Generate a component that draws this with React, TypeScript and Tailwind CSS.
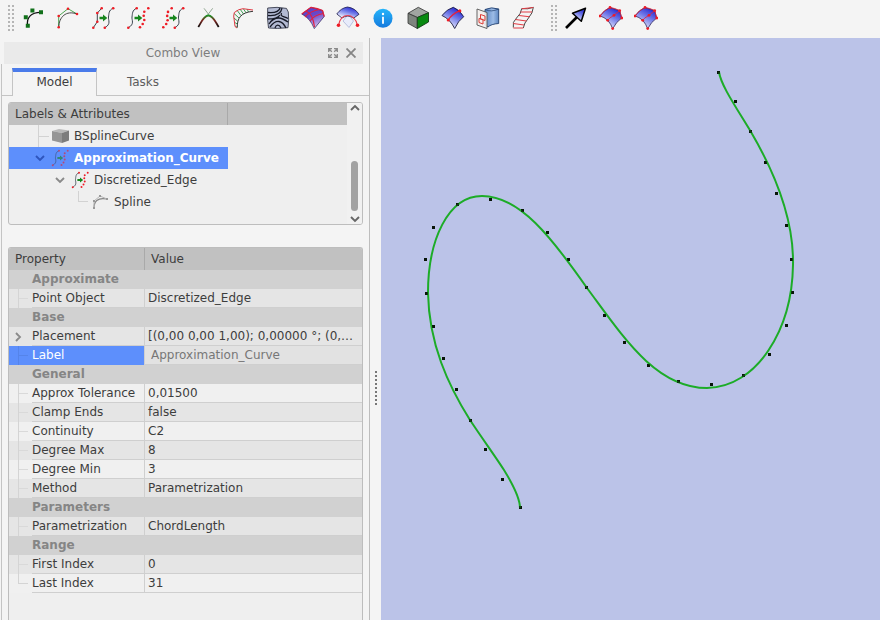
import React from 'react';

type IconProps = { children: React.ReactNode };

function Icon({ children }: IconProps) {
  return (
    <svg viewBox="0 0 24 24" className="size-6" fill="none" aria-hidden="true">
      {children}
    </svg>
  );
}

function Dots({ points, r = 1.3 }: { points: number[][]; r?: number }) {
  return (
    <g fill="#ee1c25">
      {points.map(([x, y]) => (
        <circle key={`${x}-${y}`} cx={x} cy={y} r={r} />
      ))}
    </g>
  );
}

const SplineWave = ({ x = 0 }: { x?: number }) => (
  <path d={`M${2.3 + x} 21.7C${9 + x} 18 ${5.5 + x} 14 ${6 + x} 11S${6 + x} 4 ${10.7 + x} 2.3`} stroke="#26313c" strokeWidth="0.9" />
);

const GreenArrow = () => (
  <path d="M8.5 10.8H12V8.6L16.3 12 12 15.4V13.2H8.5Z" fill="#16861c" />
);

const leftDots = [[2.3, 21.3], [5.2, 18], [6.6, 14.2], [6.2, 9.9], [7, 5.9], [10.7, 2.3]];
const rightDots = [[14, 21.3], [16.7, 18], [18.3, 14], [17.7, 9.7], [18.3, 5.7], [22.3, 2.3]];

const Discretize = () => (
  <Icon>
    <SplineWave />
    <GreenArrow />
    <Dots points={[[2.3, 21.7], [10.7, 2.3], ...rightDots]} />
  </Icon>
);

const Approximate = () => (
  <Icon>
    <SplineWave x={11.5} />
    <GreenArrow />
    <Dots points={[[13.8, 21.7], [22.2, 2.3], ...leftDots]} />
  </Icon>
);

const SurfacePatch = () => (
  <Icon>
    <path d="M1 10Q5 4 11 1.5L20.7 4.7 22.7 12Q17 16 13.7 22.7 12 18 8.7 14.3 5 11 1 10Z" fill="url(#blue)" stroke="#27205c" strokeWidth="0.8" />
    <path d="M1 10Q5 4 11 1.5Q16 2 20.7 4.7L22.7 12M8.7 14.3Q10 12 15 9.3L20.7 4.7" stroke="#e5203c" strokeWidth="0.8" />
    <Dots points={[[1, 10], [11, 1.4], [20.7, 4.7], [22.7, 12], [13.7, 22.6], [8.7, 14.3], [15, 9.3]]} r={1.4} />
  </Icon>
);

const tools: { name: string; icon: React.ReactNode }[] = [
  {
    name: 'Editable spline',
    icon: (
      <Icon>
        <path d="M6.7 19.7C5 11 11 6 20 6.3" stroke="#111" strokeWidth="1.3" />
        <path d="M4.8 17.7h4v4h-4zM2.8 9.2h4v4h-4zM9.4 2.4h4v4h-4zM18 4.3h4v4h-4z" fill="#11701a" />
      </Icon>
    ),
  },
  {
    name: 'Spline',
    icon: (
      <Icon>
        <path d="M2.7 21.3V10L12 2.7 21 8" stroke="#3a9c3d" strokeWidth="0.9" />
        <path d="M2.7 21.3C3 11 10 4 21 8" stroke="#333" strokeWidth="0.9" />
        <Dots points={[[2.7, 21.3], [2.7, 10], [12, 2.7], [21, 8]]} />
      </Icon>
    ),
  },
  {
    name: 'Join curves',
    icon: (
      <Icon>
        <path d="M2.3 21.7 6.3 15.7V7L10.7 2.3" stroke="#26313c" strokeWidth="0.9" />
        <SplineWave x={11.5} />
        <GreenArrow />
        <Dots points={[[2.3, 21.7], [6.3, 15.7], [6.3, 7], [10.7, 2.3], [13.8, 21.7], [22.2, 2.3]]} />
      </Icon>
    ),
  },
  { name: 'Discretize', icon: <Discretize /> },
  { name: 'Approximate', icon: <Approximate /> },
  {
    name: 'Blend curve',
    icon: (
      <Icon>
        <path d="M8 2.3 15 11.5M16.7 2.3 9.7 11.5" stroke="#93a893" strokeWidth="1" />
        <path d="M2.3 21C5 17 7.5 9.5 12.4 9.5S20 17 22.7 21" stroke="url(#blend)" strokeWidth="1.8" />
      </Icon>
    ),
  },
  {
    name: 'Curvature comb',
    icon: (
      <Icon>
        <path d="M6.3 21.5 4.2 20M6.3 18 3 16M6.6 15 2.8 12M8 12 3 7.4M10 9.6 6 4.2M12.5 8 9 3M15 6.7 12.5 3M17.5 6 16 3" stroke="#279643" strokeWidth="0.9" />
        <path d="M6.3 21.5C6 12 10 6.5 22 5.3" stroke="#222" strokeWidth="0.9" />
        <path d="M6 22 4 20.5 2.7 10 3.3 6.5 7.5 3.8 12 2.7 22 4" stroke="#e03a45" strokeWidth="1" />
      </Icon>
    ),
  },
  {
    name: 'Zebra analysis',
    icon: (
      <Icon>
        <path d="M1.7 2Q11 .5 20.5 2.4L22.3 6Q23.2 14 22 21.7 11 23 2.5 22Q.8 12 1.7 2Z" fill="#b3bad3" stroke="#26293a" strokeWidth="0.8" />
        <path d="M2 6.500C8 7 13 6 14 2M2 9.500C9 10 15 8 16 2.200M2 13C6 13 12 12 14 9M3 18C6 13 10 12 13 12S19 14 22 16M4 21C7 17 10 15 13 15.500S18 18 20 22M9 22C10 18.500 13 18 15 22M22 12.500C18 10 14 11 15.500 7" stroke="#171a27" strokeWidth="1.3" />
      </Icon>
    ),
  },
  {
    name: 'Trim face',
    icon: (
      <Icon>
        <path d="M.8 8 10 1.3 21.5 4.5 23.2 10.5 13.3 22.6Q9 12 .8 8Z" fill="url(#violet)" stroke="#27205c" strokeWidth="0.7" />
        <path d="M.8 8 10 1.3Q17 2 21.5 4.5L23.2 10.5M4 11Q9 5 19 3.5M9 15Q13 9 22.500 7.500M5 5Q12 8 13.500 21" stroke="#e0203f" strokeWidth="1.2" />
      </Icon>
    ),
  },
  {
    name: 'Isocurve',
    icon: (
      <Icon>
        <path d="M7 15 12 8.5 17.5 15 13 21.5Z" fill="#e8ecfb" stroke="#a9b3d8" strokeWidth="0.8" />
        <path d="M.8 8Q5 2 11.5 1 19 2 23 8.3L17.5 12.2Q12 8 6 12Z" fill="url(#blue)" stroke="#1d1c4d" strokeWidth="0.8" />
        <path d="M2.7 19C4 11 9 9.5 12 9.5S20 12 21.3 19" stroke="#ea4050" strokeWidth="1.1" />
        <Dots points={[[2.5, 19.2], [21.5, 19.2]]} r={1.8} />
      </Icon>
    ),
  },
  {
    name: 'Geometry info',
    icon: (
      <Icon>
        <circle cx="12" cy="12.3" r="9.5" fill="url(#info)" />
        <circle cx="12" cy="8" r="1.2" fill="#fff" />
        <path d="M12 10.8V17.8" stroke="#fff" strokeWidth="1.8" />
      </Icon>
    ),
  },
  {
    name: 'Solid',
    icon: (
      <Icon>
        <path d="M12.3 1.3 2 7.3 11.3 11.5 22.5 6.7Z" fill="#a1a5a1" stroke="#333" strokeWidth="0.8" strokeLinejoin="round" />
        <path d="M2 7.3V17.3L11.3 22.5V11.5Z" fill="#7f857f" stroke="#333" strokeWidth="0.8" strokeLinejoin="round" />
        <path d="M11.3 11.5V22.5L22.5 16V6.7Z" fill="#088a10" stroke="#143b16" strokeWidth="0.9" strokeLinejoin="round" />
      </Icon>
    ),
  },
  {
    name: 'Split surface',
    icon: (
      <Icon>
        <path d="M1 9.5Q6 3 12.3 1.3 19 4 22.7 10.7 17 15 13.7 22.5 9 13 1 9.5Z" fill="url(#blue)" stroke="#1b1b3f" strokeWidth="0.9" />
        <path d="M7.3 14Q11 8 19 4.7" stroke="#e5203c" strokeWidth="1.3" />
        <Dots points={[[7.3, 14], [18.8, 4.9]]} r={1.6} />
      </Icon>
    ),
  },
  {
    name: 'Map sketch on face',
    icon: (
      <Icon>
        <path d="M9 3.5Q15 .5 22.7 3V17.5Q15 18 12 21L9 19Z" fill="url(#steel)" stroke="#23416f" strokeWidth="0.9" />
        <path d="M9 3.5Q15 6.5 22.7 3" stroke="#23416f" strokeWidth="0.7" />
        <path d="M1 3 11 6.5V22.5L1 19Z" fill="#f4efed" fillOpacity="0.9" stroke="#555" strokeWidth="0.9" />
        <path d="M4.5 8.5 9 10V14.5L4.5 13ZM3 12.5 7 13.5V18L3 16.5Z" stroke="#dc3c36" strokeWidth="1" />
      </Icon>
    ),
  },
  {
    name: 'Sweep surface',
    icon: (
      <Icon>
        <path d="M2.3 21.5Q1 16 5.5 12T10.7 2.7Q17 3.5 22.3 1.3 22 7 17.5 12T12.3 22" stroke="#333" strokeWidth="0.9" />
        <path d="M2.3 22H12.3M2.3 17.5 13 19M4.5 13.5 15.5 15M8 9.5 18.5 10.7M9.5 6 21 6M10.7 2.7 22.3 1.5" stroke="#e23d45" strokeWidth="1.1" />
      </Icon>
    ),
  },
];

const extraTools = [
  {
    name: 'Pick arrow',
    icon: (
      <Icon>
        <path d="M2 22 13 11" stroke="#000" strokeWidth="2.6" />
        <path d="M21.5 2.3 8.5 7.3 17.3 15.3Z" fill="url(#blue)" stroke="#000" strokeWidth="1.5" strokeLinejoin="round" />
      </Icon>
    ),
  },
  { name: 'Gordon surface', icon: <SurfacePatch /> },
  { name: 'Segment surface', icon: <SurfacePatch /> },
];

function Gradients() {
  return (
    <svg className="absolute size-0" aria-hidden="true">
      <defs>
        <linearGradient id="blue" x1="0.9" y1="0.1" x2="0.4" y2="1">
          <stop offset="0" stopColor="#2022cf" />
          <stop offset="0.45" stopColor="#6f78e8" />
          <stop offset="1" stopColor="#eef1fd" />
        </linearGradient>
        <linearGradient id="violet" x1="0" y1="0" x2="0.4" y2="1">
          <stop offset="0" stopColor="#4a3fd0" />
          <stop offset="0.5" stopColor="#6a48c8" />
          <stop offset="1" stopColor="#c9b6ea" />
        </linearGradient>
        <linearGradient id="blend" x1="0" y1="9" x2="0" y2="21" gradientUnits="userSpaceOnUse">
          <stop offset="0" stopColor="#169a25" />
          <stop offset="0.45" stopColor="#7c2720" />
          <stop offset="1" stopColor="#0c0c0c" />
        </linearGradient>
        <linearGradient id="info" x1="0" y1="0" x2="0" y2="1">
          <stop offset="0" stopColor="#24b4fa" />
          <stop offset="1" stopColor="#1579dd" />
        </linearGradient>
        <linearGradient id="steel" x1="0" y1="0" x2="1" y2="0">
          <stop offset="0" stopColor="#5d88c4" />
          <stop offset="0.6" stopColor="#9dbce6" />
          <stop offset="1" stopColor="#5c86c0" />
        </linearGradient>
      </defs>
    </svg>
  );
}

function Grip() {
  return (
    <svg className="h-7 w-[6px] shrink-0" aria-hidden="true">
      <path d="M1 1V28M5 1V28" stroke="#b5b5b5" strokeWidth="2" strokeDasharray="2 2" />
    </svg>
  );
}

function Chevron({ dir, color = '#8a8a8a' }: { dir: 'up' | 'down' | 'right'; color?: string }) {
  const d = { up: 'M1 7 5 3 9 7', down: 'M1 3 5 7 9 3', right: 'M3 1 7 5 3 9' }[dir];
  return (
    <svg viewBox="0 0 10 10" className="size-[10px] shrink-0" fill="none" aria-hidden="true">
      <path d={d} stroke={color} strokeWidth="1.9" />
    </svg>
  );
}

function ToolButton({ name, icon }: { name: string; icon: React.ReactNode }) {
  return (
    <button type="button" aria-label={name} title={name} className="flex w-[35px] shrink-0 justify-center">
      {icon}
    </button>
  );
}

function Toolbar() {
  return (
    <header className="flex h-[38px] items-center overflow-hidden bg-[#f4f4f4] pb-[2px] pl-2">
      <Grip />
      <div className="ml-[1px] flex">
        {tools.map((t) => <ToolButton key={t.name} {...t} />)}
      </div>
      <div className="ml-[11px] flex items-center">
        <Grip />
        <div className="ml-[1px] flex">
          {extraTools.map((t) => <ToolButton key={t.name} {...t} />)}
        </div>
      </div>
    </header>
  );
}

function ModelTree() {
  return (
    <section className="mt-[6px] mr-[6px] ml-2 flex h-[123px] overflow-hidden rounded-[3px] border border-[#bdbdbd] bg-[#efefef]">
      <div className="min-w-0 flex-1">
        <div className="flex h-[22px] items-center bg-[#c1c1c1]">
          <span className="flex h-full w-[219px] items-center border-r border-[#a9a9a9] pl-[6px]">Labels &amp; Attributes</span>
        </div>
        <ul role="tree" aria-label="Model" className="leading-[22px]">
          <li role="treeitem" aria-selected="false" className="flex h-[22px] items-center pl-[29px]">
            <span className="h-full border-l border-[#d2d2d2]" />
            <span className="w-[10px] border-t border-[#d2d2d2]" />
            <svg viewBox="0 0 18 18" className="mr-[4px] ml-[3px] size-[18px]" aria-hidden="true">
              <path d="M0 4 7 2 17 3.500 10 6Z" fill="#b8b8b8" />
              <path d="M0 4 10 6V16L0 13.500Z" fill="#959595" />
              <path d="M10 6 17 3.500V13.500L10 16Z" fill="#7c7c7c" />
            </svg>
            BSplineCurve
          </li>
          <li role="treeitem" aria-expanded="true" aria-selected="true" className="flex h-[22px] w-[219px] items-center bg-[#5d8ffc] pl-[26px] font-bold text-white">
            <Chevron dir="down" color="#2e55bd" />
            <span className="ml-[6px] flex h-4 w-[18px] items-center justify-center opacity-60 [&>svg]:size-[18px]"><Discretize /></span>
            <span className="ml-[5px]">Approximation_Curve</span>
          </li>
          <li role="treeitem" aria-expanded="true" aria-selected="false" className="flex h-[22px] items-center pl-[46px]">
            <Chevron dir="down" />
            <span className="ml-[6px] flex h-4 w-[18px] items-center justify-center [&>svg]:size-[18px]"><Discretize /></span>
            <span className="ml-[5px]">Discretized_Edge</span>
          </li>
          <li role="treeitem" aria-selected="false" className="flex h-[22px] items-center pl-[69px]">
            <span className="mb-[11px] h-[11px] w-[10px] border-b border-l border-[#d2d2d2]" />
            <svg viewBox="0 0 18 18" className="mx-[4px] size-[18px]" fill="none" aria-hidden="true">
              <path d="M2 15C2 9 5 4 15 6" stroke="#858585" strokeWidth="1.2" />
              <path d="M2 15V8L8 3 15 6" stroke="#b7b7b7" />
              <path d="M1 14h2v2H1zM1 7h2v2H1zM7 2h2v2H7zM14 5h2v2h-2z" fill="#999" />
            </svg>
            Spline
          </li>
        </ul>
      </div>
      <div className="flex w-[15px] flex-col items-center justify-between bg-[#f1f1f1]">
        <button type="button" aria-label="Scroll up"><Chevron dir="up" color="#666" /></button>
        <div className="mt-auto mb-[3px] h-[50px] w-[7px] rounded-full bg-[#a2a2a2]" />
        <button type="button" aria-label="Scroll down"><Chevron dir="down" color="#666" /></button>
      </div>
    </section>
  );
}

type Row = { name: string; value?: string; shade?: boolean; kind?: 'group' | 'expand' | 'edit' | 'last' };

const rows: Row[] = [
  { name: 'Approximate', kind: 'group' },
  { name: 'Point Object', value: 'Discretized_Edge', shade: true },
  { name: 'Base', kind: 'group' },
  { name: 'Placement', value: '[(0,00 0,00 1,00); 0,00000 °; (0,…', shade: true, kind: 'expand' },
  { name: 'Label', value: 'Approximation_Curve', kind: 'edit' },
  { name: 'General', kind: 'group' },
  { name: 'Approx Tolerance', value: '0,01500' },
  { name: 'Clamp Ends', value: 'false', shade: true },
  { name: 'Continuity', value: 'C2' },
  { name: 'Degree Max', value: '8', shade: true },
  { name: 'Degree Min', value: '3' },
  { name: 'Method', value: 'Parametrization', shade: true },
  { name: 'Parameters', kind: 'group' },
  { name: 'Parametrization', value: 'ChordLength', shade: true },
  { name: 'Range', kind: 'group' },
  { name: 'First Index', value: '0', shade: true },
  { name: 'Last Index', value: '31', kind: 'last' },
];

function PropertyRow({ name, value, shade, kind }: Row) {
  if (kind === 'group') {
    return (
      <tr className="h-[19px] bg-[#d1d1d1]">
        <th colSpan={2} scope="colgroup" className="border-b border-[#d1d1d1] p-0 pl-[23px] text-left font-bold text-[#858585]">{name}</th>
      </tr>
    );
  }
  const edit = kind === 'edit';
  return (
    <tr className={`h-[19px] ${shade ? 'bg-[#e5e5e5]' : 'bg-[#f0f0f0]'}`}>
      <th scope="row" className={`p-0 text-left font-normal ${edit ? 'bg-[#5d8ffc] text-white' : ''}`}>
        <div className="flex h-[19px]">
          <span className="flex w-[23px] shrink-0 items-center pl-[4px]">
            {kind === 'expand' ? (
              <Chevron dir="right" />
            ) : (
              <span className={`ml-[5px] flex items-center ${kind === 'last' ? 'mb-[9px] h-[10px] border-b' : 'h-full'} w-[10px] border-l ${edit ? 'border-[#5584ea]' : 'border-[#d4d4d4]'}`}>
                {kind !== 'last' && <span className={`w-full border-t ${edit ? 'border-[#5584ea]' : 'border-[#d9d9d9]'}`} />}
              </span>
            )}
          </span>
          <span className={`flex-1 border-b ${edit ? 'border-[#5d8ffc]' : 'border-[#cfcfcf]'}`}>
            {edit ? <label htmlFor="label-value">{name}</label> : name}
          </span>
        </div>
      </th>
      <td className="border-b border-l border-[#cfcfcf] p-0">
        {edit ? (
          <input id="label-value" defaultValue={value} className="block h-[18px] w-full bg-[#e2e2e2] pl-[6px] text-[#777] outline-none" />
        ) : (
          <div className="truncate pl-[3px]">{value}</div>
        )}
      </td>
    </tr>
  );
}

function Properties() {
  return (
    <section className="mt-[22px] mr-[6px] ml-2 flex-1 overflow-hidden rounded-t-[3px] border border-b-0 border-[#bdbdbd] bg-[#efefef]">
      <table className="w-full table-fixed border-separate border-spacing-0 leading-[18px]">
        <colgroup>
          <col className="w-[135px]" />
          <col />
        </colgroup>
        <thead>
          <tr className="h-[22px] bg-[#c1c1c1]">
            <th scope="col" className="p-0 pl-[6px] text-left font-normal">Property</th>
            <th scope="col" className="border-l border-[#a9a9a9] p-0 pl-[6px] text-left font-normal">Value</th>
          </tr>
        </thead>
        <tbody>
          {rows.map((r) => <PropertyRow key={r.name} {...r} />)}
        </tbody>
      </table>
    </section>
  );
}

function ComboView() {
  return (
    <aside className="flex w-[370px] shrink-0 flex-col border-r border-[#bdbdbd]">
      <div className="mt-[4px] mr-[6px] ml-1 flex h-[22px] shrink-0 items-center bg-[#eaeaea] text-[#7d7d7d]">
        <h1 className="flex-1 pl-[34px] text-center">Combo View</h1>
        <button type="button" aria-label="Float panel" className="mr-[8px]">
          <svg viewBox="0 0 10 10" className="size-[10px]" fill="none" stroke="#8a8a8a" strokeWidth="1.3" aria-hidden="true">
            <path d="M.7 4V.7H4M6 .7H9.3V4M9.3 6V9.3H6M4 9.3H.7V6M1 1 3.8 3.8M9 1 6.2 3.8M9 9 6.2 6.2M1 9 3.8 6.2" />
          </svg>
        </button>
        <button type="button" aria-label="Close panel" className="mr-[7px]">
          <svg viewBox="0 0 10 10" className="size-[10px]" fill="none" stroke="#858585" strokeWidth="1.8" aria-hidden="true">
            <path d="M.5 .5 9.5 9.5M9.5 .5 .5 9.5" />
          </svg>
        </button>
      </div>
      <div className="ml-[1px] flex flex-1 flex-col border-l border-[#c4c4c4]">
        <div role="tablist" className="flex h-8 shrink-0 pt-[4px]">
          <span className="w-[10px] border-b border-[#c4c4c4]" />
          <button type="button" role="tab" aria-selected="true" className="w-[85px] border-x border-t-4 border-[#c4c4c4] border-t-[#4a7bea] pb-[4px]">Model</button>
          <button type="button" role="tab" aria-selected="false" className="w-[92px] border-b border-[#c4c4c4] pt-[1px] text-[#5c5c5c]">Tasks</button>
          <span className="flex-1 border-b border-[#c4c4c4]" />
        </div>
        <div className="-ml-[2px] flex flex-1 flex-col">
          <ModelTree />
          <Properties />
        </div>
      </div>
    </aside>
  );
}

const samples = [
  [718, 72], [735, 101], [750, 131], [765, 162], [776, 193], [786, 225], [791, 259], [792, 292], [786, 325],
  [769, 354], [743, 375], [711, 384], [678, 381], [648, 365], [624, 342], [604, 315], [586, 287], [568, 259],
  [547, 232], [522, 210], [490, 199], [457, 204], [433, 227], [425, 259], [426, 293], [433, 326], [443, 358],
  [456, 389], [470, 420], [485, 449], [502, 479], [520, 507],
];

function Viewport() {
  return (
    <main className="min-w-0 flex-1 overflow-hidden bg-[#bbc3e8]">
      <svg viewBox="381 38 499 582" className="h-[582px] w-[499px]" fill="none" role="img" aria-label="Approximation curve">
        {samples.map(([x, y]) => (
          <rect key={`${x}-${y}`} x={x - 1} y={y - 1} width="3" height="3" fill="#081608" />
        ))}
        <path
          d="M719 72C721 85 734 104 751 132C775 173 794 218 793 265C792 330 757 387 707 388C655 388 622 335 587 288C552 238 520 196 482 196C448 196 428 240 428 293C429 344 448 385 470 420C484 441 495 456 504 470C512 483 520 497 520 508"
          stroke="#1cac27"
          strokeWidth="2"
        />
        {samples.map(([x, y]) => (
          <rect key={`${x}-${y}`} x={x - 1} y={y - 1} width="3" height="3" fill="#081608" fillOpacity="0.7" />
        ))}
      </svg>
    </main>
  );
}

export default function App() {
  return (
    <div className="flex h-screen flex-col overflow-hidden bg-[#f4f4f4] font-['DejaVu_Sans',sans-serif] text-[12px] text-[#3d3d3d]">
      <Gradients />
      <Toolbar />
      <div className="flex min-h-0 flex-1">
        <ComboView />
        <div role="separator" aria-orientation="vertical" className="flex w-[11px] shrink-0 items-center justify-center">
          <svg className="mb-[-118px] h-[35px] w-[2px]" aria-hidden="true">
            <path d="M1 0V35" stroke="#777" strokeWidth="2" strokeDasharray="2 2" />
          </svg>
        </div>
        <Viewport />
      </div>
    </div>
  );
}
